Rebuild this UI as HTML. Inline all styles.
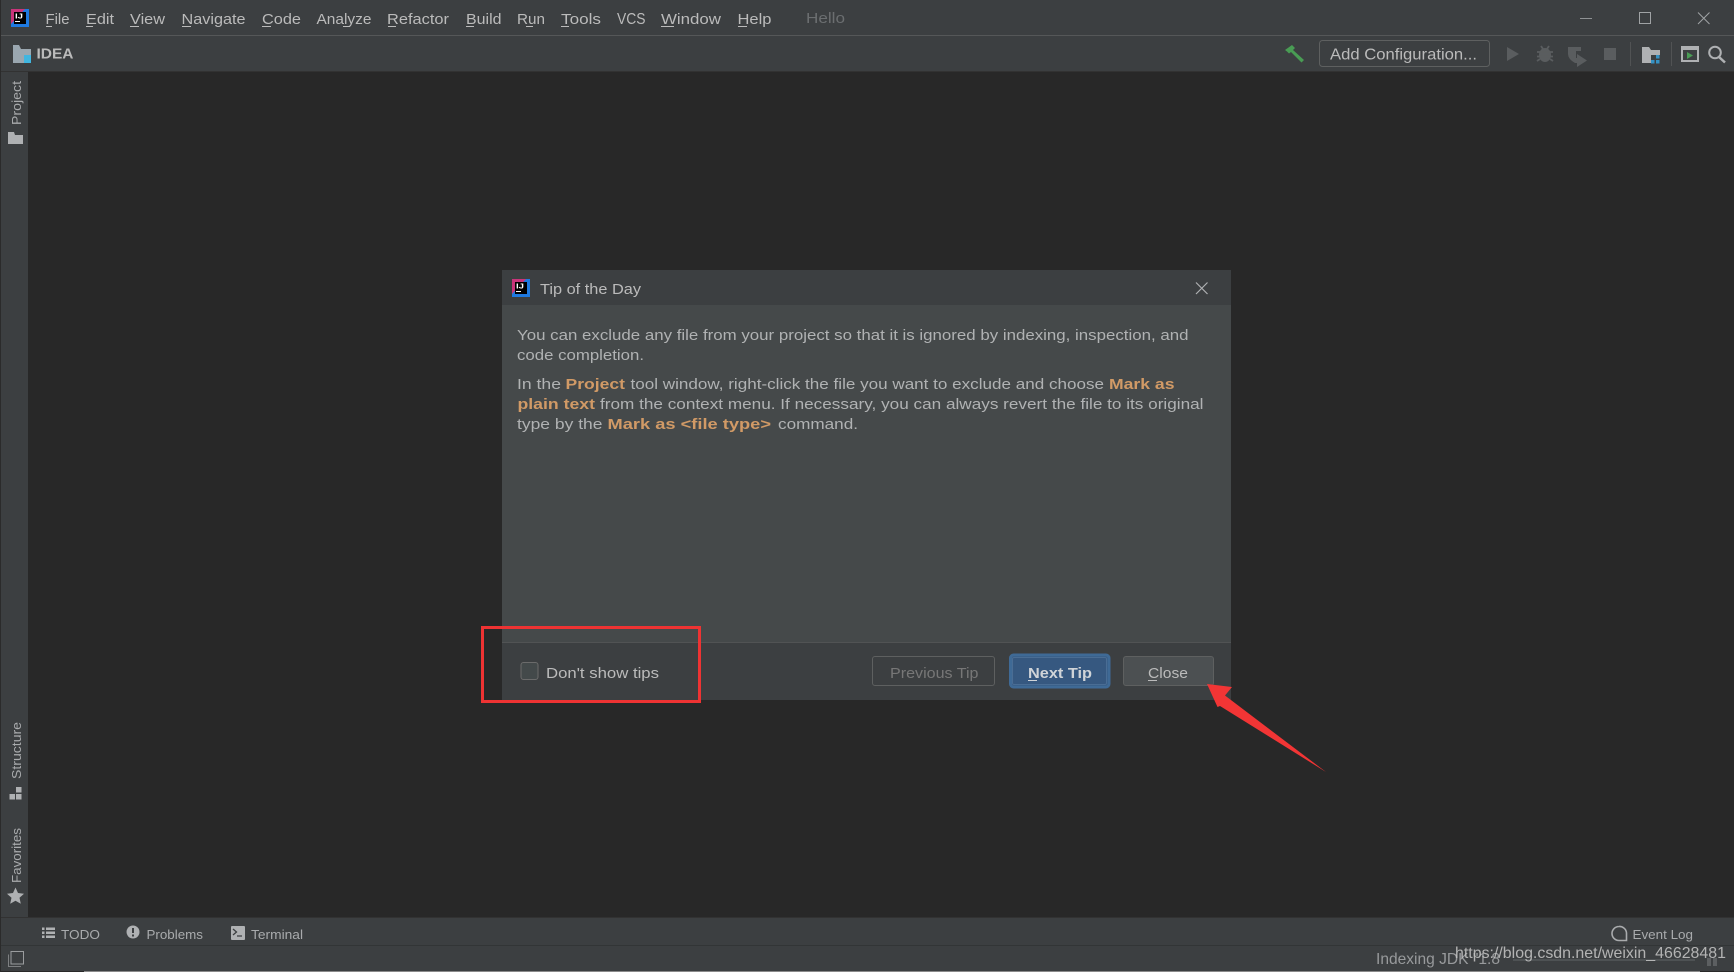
<!DOCTYPE html>
<html><head><meta charset="utf-8"><style>
html,body{margin:0;padding:0;background:#282828;width:1734px;height:972px;overflow:hidden}
svg{display:block}
text{font-family:"Liberation Sans",sans-serif}
</style></head><body>
<svg width="1734" height="972" viewBox="0 0 1734 972" xmlns="http://www.w3.org/2000/svg">
<rect width="1734" height="972" fill="#282828"/>
<!-- top bars -->
<rect width="1734" height="35" fill="#3c3f41"/>
<rect y="35" width="1734" height="1" fill="#555758"/>
<rect y="36" width="1734" height="35" fill="#3c3f41"/>
<rect y="71" width="1734" height="1" fill="#323232"/>
<rect x="0" y="0" width="1" height="972" fill="#2b2b2b"/>
<!-- IJ icon -->
<g>
<rect x="11" y="9" width="18" height="18" fill="#1f7ae0"/>
<path d="M11 9h14L11 24z" fill="#c9347a"/>
<rect x="14" y="12" width="12" height="12" fill="#000"/>
<text x="15" y="18.5" font-size="7" font-weight="bold" fill="#fff" textLength="8" lengthAdjust="spacingAndGlyphs">IJ</text>
<rect x="15" y="21" width="5" height="1" fill="#fff"/>
</g>
<!-- menu -->
<g font-size="15" fill="#bbbbbb">
<text x="45.5" y="24" textLength="24" lengthAdjust="spacingAndGlyphs">File</text>
<text x="86" y="24" textLength="28" lengthAdjust="spacingAndGlyphs">Edit</text>
<text x="130" y="24" textLength="35" lengthAdjust="spacingAndGlyphs">View</text>
<text x="181.5" y="24" textLength="64" lengthAdjust="spacingAndGlyphs">Navigate</text>
<text x="262" y="24" textLength="39" lengthAdjust="spacingAndGlyphs">Code</text>
<text x="316.5" y="24" textLength="55" lengthAdjust="spacingAndGlyphs">Analyze</text>
<text x="387" y="24" textLength="62" lengthAdjust="spacingAndGlyphs">Refactor</text>
<text x="466" y="24" textLength="35.5" lengthAdjust="spacingAndGlyphs">Build</text>
<text x="517" y="24" textLength="28" lengthAdjust="spacingAndGlyphs">Run</text>
<text x="561" y="24" textLength="40" lengthAdjust="spacingAndGlyphs">Tools</text>
<text x="617" y="24" font-size="16" textLength="28.5" lengthAdjust="spacingAndGlyphs">VCS</text>
<text x="661" y="24" textLength="60" lengthAdjust="spacingAndGlyphs">Window</text>
<text x="737.500" y="24" textLength="34" lengthAdjust="spacingAndGlyphs">Help</text>
<text x="806" y="23" textLength="39" lengthAdjust="spacingAndGlyphs" fill="#6b6e70">Hello</text>
</g>
<g fill="#bbbbbb">
<rect x="46" y="26" width="6" height="1"/><rect x="86" y="26" width="7" height="1"/><rect x="130" y="26" width="9" height="1"/><rect x="182" y="26" width="9" height="1"/><rect x="262" y="26" width="9" height="1"/><rect x="343" y="26" width="7" height="1"/><rect x="388" y="26" width="8" height="1"/><rect x="466" y="26" width="8" height="1"/><rect x="526" y="26" width="7" height="1"/><rect x="561" y="26" width="8" height="1"/><rect x="661" y="26" width="13" height="1"/><rect x="738" y="26" width="9" height="1"/>
</g>
<!-- window controls -->
<rect x="1580" y="18" width="12" height="1" fill="#8f9294"/>
<rect x="1639.5" y="12.5" width="11" height="11" fill="none" stroke="#a0a3a5" stroke-width="1"/>
<path d="M1698 12.5l11.5 11.5M1709.5 12.5l-11.5 11.5" stroke="#a0a3a5" stroke-width="1" fill="none"/>
<!-- IDEA -->
<path d="M13 45h6l2 4h10v14H13z" fill="#9aa7b0"/>
<rect x="24" y="55" width="7" height="8" fill="#40b6e0"/>
<text x="36.500" y="58.5" font-size="15" font-weight="bold" fill="#bbbbbb" textLength="37" lengthAdjust="spacingAndGlyphs">IDEA</text>
<!-- toolbar right -->
<path d="M1285 50l7-5 3 3 -2 2 11 10 -2.500 2.500 -10.500-10.500-2 1.500-2 -2z" fill="#499c54"/>
<rect x="1319.500" y="40.500" width="170" height="26" rx="3" fill="#3c3f41" stroke="#5e6060"/>
<text x="1330" y="59.500" font-size="16" fill="#bbbbbb" textLength="147" lengthAdjust="spacingAndGlyphs">Add Configuration...</text>
<path d="M1507 47l12 7-12 7z" fill="#5a5d5f"/>
<ellipse cx="1545" cy="55" rx="6" ry="7" fill="#5a5d5f"/>
<path d="M1541 46l2 3M1549 46l-2 3M1537 52h16M1537 56.500h16M1537 61l3-2M1553 61l-3-2" stroke="#5a5d5f" stroke-width="1.800" fill="none"/>
<path d="M1568 47h13v4h-5v7h2v5h-3q-7-4-7-9z" fill="#5a5d5f"/><path d="M1577 54l10 6.500-10 6.500z" fill="#5a5d5f"/>
<rect x="1604" y="48" width="12" height="12" fill="#5a5d5f"/>
<rect x="1630" y="42" width="1" height="24" fill="#515354"/>
<path d="M1642 47h7l2 3h9v13h-18z" fill="#afb1b3"/>
<rect x="1651" y="55" width="9" height="9" fill="#3c3f41"/>
<g fill="#3592c4"><rect x="1651" y="60" width="3.500" height="3.500"/><rect x="1656" y="60" width="3.500" height="3.500"/><rect x="1656" y="55" width="3.500" height="3.500"/></g>
<rect x="1671" y="42" width="1" height="24" fill="#515354"/>
<rect x="1682" y="47" width="16" height="14" fill="none" stroke="#afb1b3" stroke-width="2"/>
<rect x="1682" y="47" width="16" height="3" fill="#afb1b3"/>
<path d="M1687 52l6 3.500-6 3.500z" fill="#499c54"/>
<circle cx="1715" cy="52.500" r="5.800" fill="none" stroke="#afb1b3" stroke-width="2"/>
<path d="M1719 57l6 5.500" stroke="#afb1b3" stroke-width="2.500"/>
<!-- left strip -->
<rect x="1" y="72" width="27" height="845" fill="#3c3f41"/>
<g font-size="13" fill="#a9abad">
<text transform="translate(21 125) rotate(-90)" textLength="44" lengthAdjust="spacingAndGlyphs">Project</text>
<text transform="translate(21 779) rotate(-90)" textLength="57" lengthAdjust="spacingAndGlyphs">Structure</text>
<text transform="translate(21 883) rotate(-90)" textLength="55" lengthAdjust="spacingAndGlyphs">Favorites</text>
</g>
<path d="M8 132h6l1 3h8v9H8z" fill="#afb1b3"/>
<g fill="#afb1b3"><rect x="16" y="787" width="5.500" height="5.500"/><rect x="9.500" y="794" width="5.500" height="5.500"/><rect x="16" y="794" width="5.500" height="5.500"/></g>
<path d="M15.500 887.500l2.500 5.500 6 .7-4.500 4 1.300 6-5.300-3-5.300 3 1.300-6-4.500-4 6-.7z" fill="#afb1b3"/>
<!-- bottom -->
<rect x="1" y="917" width="1733" height="54" fill="#3c3f41"/>
<rect x="1" y="917" width="1733" height="1" fill="#323232"/>
<rect x="1" y="945" width="1733" height="1" fill="#323536"/>
<rect x="84" y="971" width="1616" height="1" fill="#8a8a8a"/>
<g fill="#afb1b3">
<rect x="42" y="927.500" width="2.500" height="2.500"/><rect x="46" y="927.500" width="9" height="2.500"/>
<rect x="42" y="931.500" width="2.500" height="2.500"/><rect x="46" y="931.500" width="9" height="2.500"/>
<rect x="42" y="935.500" width="2.500" height="2.500"/><rect x="46" y="935.500" width="9" height="2.500"/>
<circle cx="133" cy="932" r="6.500"/>
<rect x="231" y="926" width="14" height="14" rx="1"/>
</g>
<rect x="132" y="928" width="2" height="5" fill="#3c3f41"/><rect x="132" y="934.500" width="2" height="2" fill="#3c3f41"/>
<path d="M233 929l3.500 3-3.500 3M237 936h5" stroke="#3c3f41" stroke-width="1.300" fill="none"/>
<g font-size="13" fill="#a9abad">
<text x="61" y="939" textLength="39" lengthAdjust="spacingAndGlyphs">TODO</text>
<text x="146.500" y="939" textLength="56.500" lengthAdjust="spacingAndGlyphs">Problems</text>
<text x="251" y="939" textLength="52" lengthAdjust="spacingAndGlyphs">Terminal</text>
<text x="1632.500" y="939" textLength="60.500" lengthAdjust="spacingAndGlyphs">Event Log</text>
</g>
<path d="M8.500 954h13v11h-13z" fill="none" stroke="#3c3f41"/>
<path d="M11 951.500h12.500v12.500H11z" fill="none" stroke="#9a9c9e" stroke-width="1"/>
<path d="M8.500 954.500v12h12.500" fill="none" stroke="#7e8082" stroke-width="1"/>
<path d="M1619 926.500a7 7 0 1 0 0 14h7.500v-7.500a7 7 0 0 0-7.500-6.500z" fill="none" stroke="#a9abad" stroke-width="1.600"/>
<rect x="1513" y="959" width="182" height="2" fill="#4e5254"/>
<g fill="#5c5f61"><rect x="1707" y="958" width="4" height="8"/><rect x="1713" y="958" width="4" height="8"/></g>
<text x="1376" y="964" font-size="16" fill="#989a9c" textLength="124" lengthAdjust="spacingAndGlyphs">Indexing JDK "1.8</text>
<text x="1455" y="958" font-size="16" fill="#c8c8c8" fill-opacity=".85" textLength="271" lengthAdjust="spacingAndGlyphs">https://blog.csdn.net/weixin_46628481</text>
<!-- dialog -->
<rect x="502" y="270" width="729" height="430" fill="#3c3f41"/>
<rect x="502" y="305" width="729" height="337" fill="#45494a"/>
<rect x="502" y="642" width="729" height="1" fill="#515354"/>
<rect x="512" y="279" width="18" height="18" fill="#1f7ae0"/>
<path d="M512 279h14l-14 15z" fill="#c9347a"/>
<rect x="515" y="282" width="12" height="12" fill="#000"/>
<text x="516" y="288.500" font-size="7" font-weight="bold" fill="#fff" textLength="8" lengthAdjust="spacingAndGlyphs">IJ</text>
<rect x="516" y="291" width="5" height="1" fill="#fff"/>
<text x="540" y="294" font-size="15" fill="#bbbbbb" textLength="101" lengthAdjust="spacingAndGlyphs">Tip of the Day</text>
<path d="M1196 282.500l11.500 11.500M1207.500 282.500l-11.500 11.500" stroke="#afb1b3" stroke-width="1.200" fill="none"/>
<g font-size="15" fill="#b0b2b3">
<text x="517" y="340" textLength="671.500" lengthAdjust="spacingAndGlyphs">You can exclude any file from your project so that it is ignored by indexing, inspection, and</text>
<text x="517" y="360" textLength="127" lengthAdjust="spacingAndGlyphs">code completion.</text>
<text x="517" y="389" textLength="44" lengthAdjust="spacingAndGlyphs">In the</text>
<text x="630.500" y="389" textLength="473.500" lengthAdjust="spacingAndGlyphs">tool window, right-click the file you want to exclude and choose</text>
<text x="600" y="409" textLength="603.500" lengthAdjust="spacingAndGlyphs">from the context menu. If necessary, you can always revert the file to its original</text>
<text x="517" y="429" textLength="85.500" lengthAdjust="spacingAndGlyphs">type by the</text>
<text x="778" y="429" textLength="80" lengthAdjust="spacingAndGlyphs">command.</text>
</g>
<g font-size="15" font-weight="bold" fill="#d19a66">
<text x="565.500" y="389" textLength="59.500" lengthAdjust="spacingAndGlyphs">Project</text>
<text x="1109" y="389" textLength="65.500" lengthAdjust="spacingAndGlyphs">Mark as</text>
<text x="517.500" y="409" textLength="77.500" lengthAdjust="spacingAndGlyphs">plain text</text>
<text x="607.500" y="429" textLength="163.500" lengthAdjust="spacingAndGlyphs">Mark as &lt;file type&gt;</text>
</g>
<!-- footer -->
<rect x="521" y="662.500" width="17" height="17" rx="2.500" fill="#43494a" stroke="#6b6b6b"/>
<text x="546" y="678" font-size="15" fill="#bbbbbb" textLength="113" lengthAdjust="spacingAndGlyphs">Don't show tips</text>
<rect x="872.500" y="656.500" width="122" height="29" rx="2.500" fill="#3c3f41" stroke="#5e6060"/>
<text x="890" y="678" font-size="15" fill="#777777" textLength="88.500" lengthAdjust="spacingAndGlyphs">Previous Tip</text>
<rect x="1010.500" y="655" width="98.500" height="32" rx="3" fill="#365880" stroke="#3f6a96" stroke-width="3"/>
<rect x="1012.500" y="657.500" width="94" height="27" rx="1.500" fill="none" stroke="#4a6d94" stroke-width="1"/>
<text x="1028" y="678" font-size="15" font-weight="bold" fill="#d0d4d8" textLength="64" lengthAdjust="spacingAndGlyphs">Next Tip</text>
<rect x="1028" y="680" width="9" height="1" fill="#d0d4d8"/>
<rect x="1123.500" y="656.500" width="90" height="29" rx="2.500" fill="#4c5052" stroke="#5e6060"/>
<text x="1148" y="678" font-size="15" fill="#bbbbbb" textLength="40" lengthAdjust="spacingAndGlyphs">Close</text>
<rect x="1148" y="680" width="9" height="1" fill="#bbbbbb"/>
<!-- annotations -->
<rect x="482.500" y="627.500" width="217" height="74" fill="none" stroke="#ee3333" stroke-width="3"/>
<path d="M1207 684l25 3-7 8.500L1326 772l-106-66-2.500 1z" fill="#f23535"/>
</svg>
</body></html>
